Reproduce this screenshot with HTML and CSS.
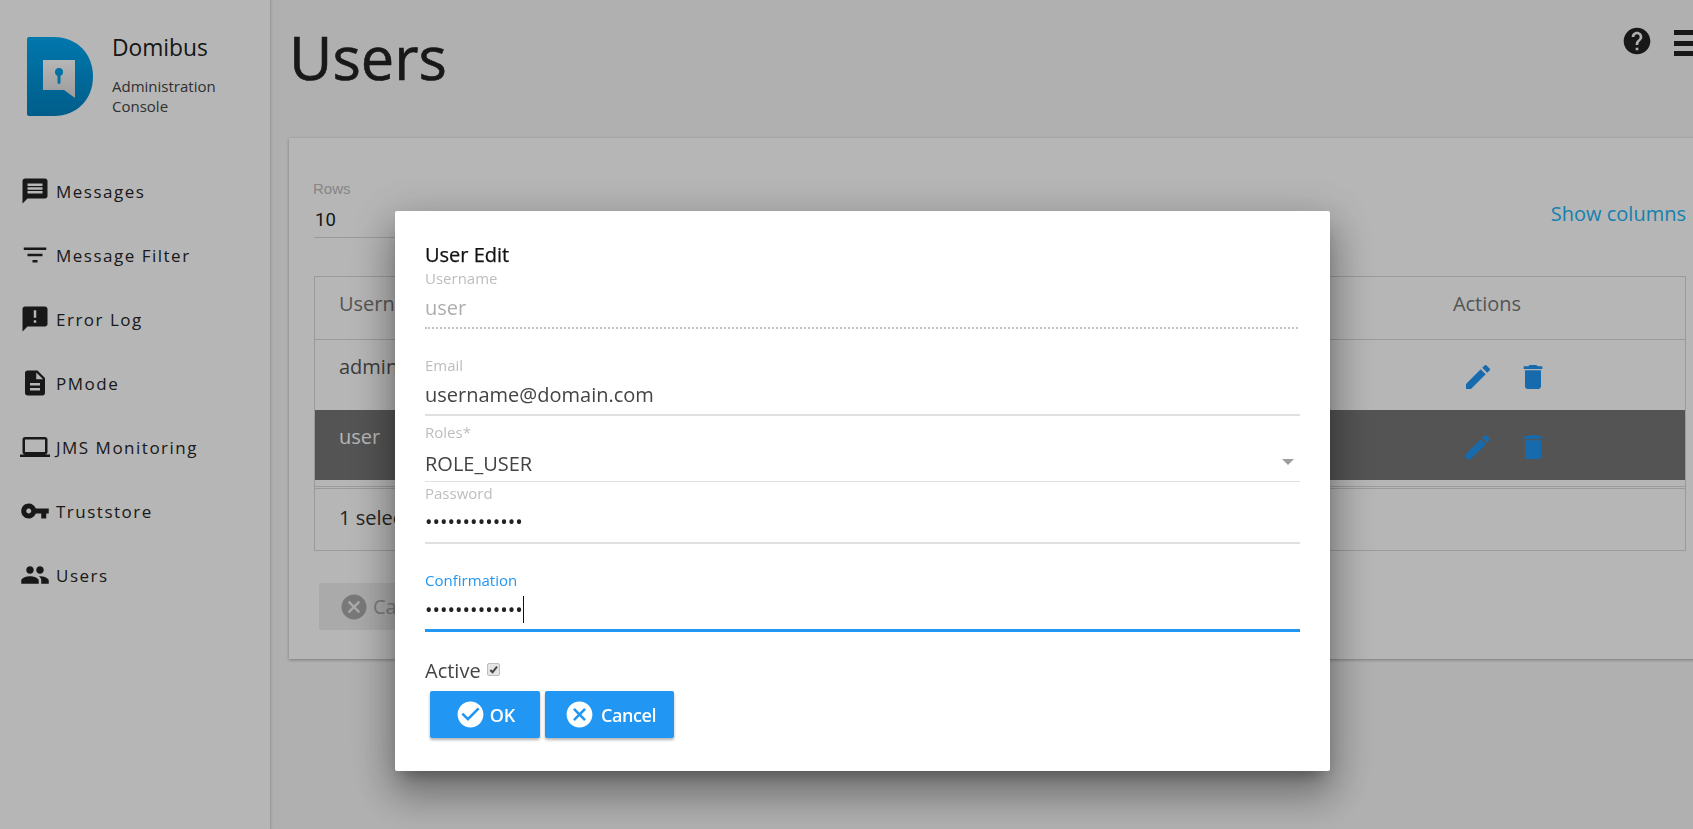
FILE: index.html
```html
<!DOCTYPE html>
<html lang="en">
<head>
<meta charset="utf-8">
<title>Users</title>
<link rel="stylesheet" href="styles.css">
</head>
<body>
<div class="app">
  <aside class="sidebar">
    <div class="brand">
      <svg class="logo" viewBox="0 0 66 79">
        <defs>
          <linearGradient id="lg" x1="0" y1="0" x2="0" y2="1"><stop offset="0" stop-color="#02a8f2"/><stop offset="1" stop-color="#0083c2"/></linearGradient>
          <linearGradient id="lk" x1="0" y1="0" x2="0" y2="1"><stop offset="0" stop-color="#fff"/><stop offset="1" stop-color="#dcdcdc"/></linearGradient>
        </defs>
        <path d="M2 0H27C50 0 66 17 66 39.500C66 62 50 79 27 79H2Q0 79 0 77V2Q0 0 2 0Z" fill="url(#lg)"/>
        <path d="M16 23H48V61L37 53H16Z" fill="url(#lk)"/>
        <circle cx="32" cy="35" r="4" fill="#02a0e6"/>
        <path d="M30.500 36H33.500V46Q32 48 30.500 46Z" fill="#02a0e6"/>
      </svg>
      <div class="brand-text">
        <div class="brand-name">Domibus</div>
        <div class="brand-sub">Administration Console</div>
      </div>
    </div>
    <nav class="nav">
      <a class="nav-item"><svg class="nav-icon" viewBox="0 0 24 24"><path d="M20 2H4c-1.100 0-1.990.9-1.990 2L2 22l4-4h14c1.100 0 2-.9 2-2V4c0-1.100-.9-2-2-2zm-2 12H6v-2h12v2zm0-3H6V9h12v2zm0-3H6V6h12v2z"/></svg><span>Messages</span></a>
      <a class="nav-item"><svg class="nav-icon" viewBox="0 0 24 24"><path d="M10 18h4v-2h-4v2zM3 6v2h18V6H3zm3 7h12v-2H6v2z"/></svg><span>Message Filter</span></a>
      <a class="nav-item"><svg class="nav-icon" viewBox="0 0 24 24"><path d="M20 2H4c-1.100 0-1.990.9-1.990 2L2 22l4-4h14c1.100 0 2-.9 2-2V4c0-1.100-.9-2-2-2zm-7 9h-2V5h2v6zm0 4h-2v-2h2v2z"/></svg><span>Error Log</span></a>
      <a class="nav-item"><svg class="nav-icon" viewBox="0 0 24 24"><path d="M14 2H6c-1.100 0-1.990.9-1.990 2L4 20c0 1.100.89 2 1.990 2H18c1.100 0 2-.9 2-2V8l-6-6zm2 16H8v-2h8v2zm0-4H8v-2h8v2zm-3-5V3.500L18.500 9H13z"/></svg><span>PMode</span></a>
      <a class="nav-item"><svg class="nav-icon" viewBox="0 0 24 24"><path d="M20 18c1.100 0 1.990-.9 1.990-2L22 6c0-1.100-.9-2-2-2H4c-1.100 0-2 .9-2 2v10c0 1.100.9 2 2 2H0v2h24v-2h-4zM4 6h16v10H4V6z"/></svg><span>JMS Monitoring</span></a>
      <a class="nav-item"><svg class="nav-icon" viewBox="0 0 24 24"><path d="M12.650 10C11.830 7.670 9.610 6 7 6c-3.310 0-6 2.690-6 6s2.690 6 6 6c2.610 0 4.830-1.670 5.650-4H17v4h4v-4h2v-4H12.650zM7 14c-1.100 0-2-.9-2-2s.9-2 2-2 2 .9 2 2-.9 2-2 2z"/></svg><span>Truststore</span></a>
      <a class="nav-item"><svg class="nav-icon" viewBox="0 0 24 24"><path d="M16 11c1.660 0 2.990-1.340 2.990-3S17.660 5 16 5c-1.660 0-3 1.340-3 3s1.340 3 3 3zm-8 0c1.660 0 2.990-1.340 2.990-3S9.660 5 8 5C6.340 5 5 6.340 5 8s1.340 3 3 3zm0 2c-2.330 0-7 1.170-7 3.500V19h14v-2.500c0-2.330-4.670-3.500-7-3.500zm8 0c-.29 0-.62.02-.97.05 1.160.84 1.970 1.970 1.970 3.450V19h6v-2.500c0-2.330-4.670-3.500-7-3.500z"/></svg><span>Users</span></a>
    </nav>
  </aside>
  <main class="main">
    <header class="topbar">
      <h1 class="page-title">Users</h1>
      <div class="top-actions">
        <svg class="help-icon" viewBox="0 0 24 24"><path d="M12 2C6.480 2 2 6.480 2 12s4.480 10 10 10 10-4.480 10-10S17.520 2 12 2zm1 17h-2v-2h2v2zm2.070-7.750l-.9.920C13.450 12.900 13 13.500 13 15h-2v-.5c0-1.100.45-2.100 1.170-2.830l1.240-1.260c.37-.36.59-.86.59-1.410 0-1.100-.9-2-2-2s-2 .9-2 2H8c0-2.210 1.790-4 4-4s4 1.790 4 4c0 .88-.36 1.680-.93 2.250z"/></svg>
        <div class="menu-icon"><i></i><i></i><i></i></div>
      </div>
    </header>
    <section class="card">
      <div class="toolbar">
        <div class="rows-field">
          <div class="rows-label">Rows</div>
          <div class="rows-value">10</div>
        </div>
        <a class="show-columns">Show columns</a>
      </div>
      <div class="grid-table">
        <div class="t-row t-head"><div class="t-main">Username</div><div class="t-actions">Actions</div></div>
        <div class="t-row t-body"><div class="t-main">admin</div><div class="t-actions"><svg class="act-icon" viewBox="0 0 24 24"><path d="M3 17.250V21h3.750L17.810 9.940l-3.750-3.750L3 17.250zM20.710 7.040c.39-.39.39-1.020 0-1.410l-2.340-2.340c-.39-.39-1.020-.39-1.410 0l-1.830 1.830 3.750 3.750 1.830-1.830z"/></svg><svg class="act-icon" viewBox="0 0 24 24"><path d="M6 19c0 1.100.9 2 2 2h8c1.100 0 2-.9 2-2V7H6v12zM19 4h-3.500l-1-1h-5l-1 1H5v2h14V4z"/></svg></div></div>
        <div class="t-row t-body t-selected"><div class="t-main">user</div><div class="t-actions"><svg class="act-icon" viewBox="0 0 24 24"><path d="M3 17.250V21h3.750L17.810 9.940l-3.750-3.750L3 17.250zM20.710 7.040c.39-.39.39-1.020 0-1.410l-2.340-2.340c-.39-.39-1.020-.39-1.410 0l-1.830 1.830 3.750 3.750 1.830-1.830z"/></svg><svg class="act-icon" viewBox="0 0 24 24"><path d="M6 19c0 1.100.9 2 2 2h8c1.100 0 2-.9 2-2V7H6v12zM19 4h-3.500l-1-1h-5l-1 1H5v2h14V4z"/></svg></div></div>
        <div class="t-gap"></div>
        <div class="t-foot">1 selected / 2 total</div>
      </div>
      <div class="card-actions">
        <button class="ghost-btn"><svg class="ghost-icon" viewBox="0 0 24 24"><path d="M12 2C6.470 2 2 6.470 2 12s4.470 10 10 10 10-4.470 10-10S17.530 2 12 2zm5 13.590L15.590 17 12 13.410 8.410 17 7 15.590 10.590 12 7 8.410 8.410 7 12 10.590 15.590 7 17 8.410 13.410 12 17 15.590z"/></svg><span>Cancel</span></button>
      </div>
    </section>
  </main>
</div>
<div class="backdrop"></div>
<div class="dialog">
  <h2 class="dialog-title">User Edit</h2>
  <div class="field field-username">
    <div class="f-label">Username</div>
    <div class="f-value f-disabled">user</div>
  </div>
  <div class="field field-email">
    <div class="f-label">Email</div>
    <div class="f-value">username@domain.com</div>
  </div>
  <div class="field field-roles">
    <div class="f-label">Roles*</div>
    <div class="f-value f-select"><span>ROLE_USER</span><i class="caret-down"></i></div>
  </div>
  <div class="field field-password">
    <div class="f-label">Password</div>
    <div class="f-value f-dots">•••••••••••••</div>
  </div>
  <div class="field field-confirm">
    <div class="f-label">Confirmation</div>
    <div class="f-value f-dots"><span>•••••••••••••</span><i class="text-caret"></i></div>
  </div>
  <div class="active-row"><span>Active</span><span class="check-box"><svg viewBox="0 0 12 12"><path d="M2.500 6.500L5 9L9.800 2.800" /></svg></span></div>
  <div class="dialog-actions">
    <button class="btn btn-ok"><svg class="btn-icon" viewBox="0 0 24 24"><path d="M12 2C6.480 2 2 6.480 2 12s4.480 10 10 10 10-4.480 10-10S17.520 2 12 2zm-2 15l-5-5 1.410-1.410L10 14.170l7.590-7.590L19 8l-9 9z"/></svg><span>OK</span></button>
    <button class="btn btn-cancel"><svg class="btn-icon" viewBox="0 0 24 24"><path d="M12 2C6.470 2 2 6.470 2 12s4.470 10 10 10 10-4.470 10-10S17.530 2 12 2zm5 13.590L15.590 17 12 13.410 8.410 17 7 15.590 10.590 12 7 8.410 8.410 7 12 10.590 15.590 7 17 8.410 13.410 12 17 15.590z"/></svg><span>Cancel</span></button>
  </div>
</div>
</body>
</html>
```

FILE: styles.css
```css
* { box-sizing: border-box; }
html, body { margin: 0; height: 100%; overflow: hidden; }
body { font-family: "Open Sans", sans-serif; color: #222; background: #f7f7f7; }

.app { display: flex; width: 1693px; height: 829px; overflow: hidden; }

.sidebar { flex: none; width: 271px; background: #fff; border-right: 1px solid #d8d8d8; box-shadow: 1px 0 2px rgba(0,0,0,.08); }
.brand { display: flex; padding: 37px 0 0 27px; height: 159px; }
.logo { flex: none; width: 66px; height: 79px; }
.brand-text { margin-left: 19px; }
.brand-name { font-size: 22.800px; line-height: 24px; margin-top: -1px; color: #222; }
.brand-sub { font-size: 15px; line-height: 20px; margin-top: 16px; width: 125px; color: #444; }
.nav { display: flex; flex-direction: column; }
.nav-item { display: flex; align-items: center; height: 64px; padding-left: 20px; font-size: 17px; letter-spacing: 1.500px; color: #262626; }
.nav-icon { flex: none; width: 30px; height: 30px; fill: #222; margin-right: 6px; }

.main { flex: 1; min-width: 0; overflow: hidden; padding-left: 18px; }
.topbar { display: flex; justify-content: space-between; height: 137px; margin-left: -18px; padding-left: 18px; }
.page-title { margin: 20px 0 0; font-size: 59.500px; line-height: 74px; font-weight: 500; color: #222; -webkit-text-stroke: .6px #222; }
.top-actions { display: flex; align-items: flex-start; padding-top: 25px; }
.help-icon { width: 32px; height: 32px; fill: #222; margin-right: 21px; }
.menu-icon { display: flex; flex-direction: column; justify-content: space-between; width: 28px; height: 26px; margin-top: 5px; flex: none; margin-right: -9px; }
.menu-icon i { display: block; height: 5px; background: #222; }

.card { width: 1440px; height: 521px; margin-top: 1px; background: #fff; box-shadow: 0 -1px 0 #ececec, 0 1px 3px rgba(0,0,0,.3); padding: 0 0 0 25px; }
.toolbar { display: flex; justify-content: space-between; width: 1372px; height: 138px; }
.rows-field { width: 260px; padding-top: 42px; }
.rows-label { font-family: "Liberation Sans", sans-serif; font-size: 15px; line-height: 18px; color: #bcbcbc; margin-left: -1px; }
.rows-value { font-family: Roboto, sans-serif; font-size: 18.500px; line-height: 25px; margin-top: 6px; padding: 4px 0 0 1px; height: 34px; color: #222; border-bottom: 1px solid #d8d8d8; }
.show-columns { font-size: 20px; line-height: 28px; margin-top: 62px; color: #22b4f4; }

.grid-table { width: 1372px; height: 275px; border: 1px solid #d8d8d8; color: #555; font-size: 20px; }
.t-row { display: flex; }
.t-head { height: 63px; border-bottom: 1px solid #d8d8d8; align-items: center; padding-bottom: 10px; }
.t-head .t-main { color: #777; }
.t-head .t-actions { color: #777; }
.t-body { height: 70px; align-items: flex-start; }
.t-main { flex: 1; padding-left: 24px; }
.t-body .t-main { padding-top: 13px; line-height: 27px; color: #555; }
.t-actions { flex: none; width: 396px; display: flex; justify-content: center; }
.t-body .t-actions { padding: 21px 0 0 37px; gap: 23px; }
.act-icon { width: 32px; height: 32px; fill: #2196f3; }
.t-selected { background: #767676; }
.t-selected .t-main { color: #fff; }
.t-gap { height: 7px; border-bottom: 1px solid #d8d8d8; }
.t-foot { height: 62px; border-top: 1px solid #d8d8d8; margin-top: 1px; padding-left: 24px; line-height: 58px; color: #333; }

.card-actions { padding: 32px 0 0 5px; }
.ghost-btn { display: flex; align-items: center; width: 150px; height: 47px; padding: 0 0 0 20px; background: #eee; border: 0; border-radius: 2px; font: 20px "Open Sans", sans-serif; color: #aaa; }
.ghost-icon { width: 30px; height: 30px; fill: #aaa; margin-right: 4px; }

.backdrop { position: fixed; inset: 0; background: rgba(0,0,0,.288); }

.dialog { position: fixed; left: 395px; top: 211px; width: 935px; height: 560px; padding: 32px 30px 0; background: #fff; border-radius: 2px; box-shadow: 0 11px 15px -7px rgba(0,0,0,.3), 0 24px 38px 3px rgba(0,0,0,.25), 0 9px 46px 8px rgba(0,0,0,.16); }
.dialog-title { margin: 0; font-size: 20px; line-height: 24px; font-weight: 500; color: #111; -webkit-text-stroke: .25px #111; }

.f-label { font-size: 15px; line-height: 20px; color: #bdbdbd; }
.f-value { height: 41px; font-size: 20px; line-height: 39px; color: #444; border-bottom: 2px solid #e0e0e0; }
.field-username { margin-top: 1px; }
.f-disabled { color: #adadad; border-bottom: 2px dotted #c4c4c4; margin-right: 2px; }
.field-email { margin-top: 26px; }
.field-roles { margin-top: 6px; }
.f-select { display: flex; justify-content: space-between; align-items: center; height: 40px; border-bottom-width: 1px; padding-right: 6px; padding-top: 4px; }
.caret-down { width: 0; height: 0; border-left: 6px solid transparent; border-right: 6px solid transparent; border-top: 6px solid #9e9e9e; margin-top: -4px; }
.field-password { margin-top: 1px; }
.f-dots { line-height: 37px; color: #222; }
.field-confirm { margin-top: 26px; }
.field-confirm .f-label { color: #2196f3; }
.field-confirm .f-dots { height: 42px; border-bottom: 3px solid #2196f3; display: flex; align-items: center; }
.text-caret { display: block; width: 1px; height: 27px; background: #111; }

.active-row { display: flex; align-items: flex-start; margin-top: 25px; font-size: 20px; line-height: 27px; color: #444; }
.check-box { display: block; width: 13px; height: 13px; margin: 6px 0 0 6px; background: #e4e4e4; border: 1px solid #bdbdbd; border-radius: 2px; }
.check-box svg { display: block; width: 11px; height: 11px; fill: none; stroke: #444; stroke-width: 2.200; }

.dialog-actions { display: flex; gap: 5px; margin: 7px 0 0 5px; }
.btn { display: flex; align-items: center; justify-content: center; height: 47px; border: 0; border-radius: 2px; background: #2196f3; color: #fff; font: 600 18px "Open Sans", sans-serif; box-shadow: 0 2px 3px rgba(0,0,0,.3); padding: 0; }
.btn-ok { width: 110px; }
.btn-cancel { width: 129px; letter-spacing: -.4px; }
.btn-cancel .btn-icon { margin-left: 1px; margin-right: 6px; }
.btn-icon { width: 31px; height: 31px; fill: #fff; margin-right: 4px; }
```
